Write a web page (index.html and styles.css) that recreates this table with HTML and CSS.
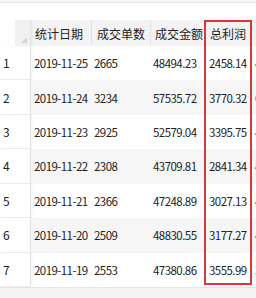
FILE: index.html
```html
<!DOCTYPE html>
<html lang="zh">
<head>
<meta charset="utf-8">
<link rel="stylesheet" href="styles.css">
</head>
<body>
<div class="topbar"></div>
<div class="sheet">
  <div class="row head">
    <div class="cell num corner"><span class="tri"></span></div>
    <div class="cell c1">统计日期</div>
    <div class="cell c2">成交单数</div>
    <div class="cell c3">成交金额</div>
    <div class="cell c4">总利润</div>
    <div class="cell c5">利润率</div>
  </div>
  <div class="row">
    <div class="cell num">1</div><div class="cell c1">2019-11-25</div><div class="cell c2">2665</div><div class="cell c3">48494.23</div><div class="cell c4">2458.14</div><div class="cell c5">4.99</div>
  </div>
  <div class="row even">
    <div class="cell num">2</div><div class="cell c1">2019-11-24</div><div class="cell c2">3234</div><div class="cell c3">57535.72</div><div class="cell c4">3770.32</div><div class="cell c5">6.55</div>
  </div>
  <div class="row">
    <div class="cell num">3</div><div class="cell c1">2019-11-23</div><div class="cell c2">2925</div><div class="cell c3">52579.04</div><div class="cell c4">3395.75</div><div class="cell c5">4.46</div>
  </div>
  <div class="row even">
    <div class="cell num">4</div><div class="cell c1">2019-11-22</div><div class="cell c2">2308</div><div class="cell c3">43709.81</div><div class="cell c4">2841.34</div><div class="cell c5">4.50</div>
  </div>
  <div class="row">
    <div class="cell num">5</div><div class="cell c1">2019-11-21</div><div class="cell c2">2366</div><div class="cell c3">47248.89</div><div class="cell c4">3027.13</div><div class="cell c5">4.41</div>
  </div>
  <div class="row even">
    <div class="cell num">6</div><div class="cell c1">2019-11-20</div><div class="cell c2">2509</div><div class="cell c3">48830.55</div><div class="cell c4">3177.27</div><div class="cell c5">4.61</div>
  </div>
  <div class="row">
    <div class="cell num">7</div><div class="cell c1">2019-11-19</div><div class="cell c2">2553</div><div class="cell c3">47380.86</div><div class="cell c4">3555.99</div><div class="cell c5">3.92</div>
  </div>
  <div class="highlight"></div>
</div>
<div class="footer"></div>
</body>
</html>
```

FILE: styles.css
```css
html, body {
  margin: 0;
  padding: 0;
}
body {
  width: 256px;
  height: 298px;
  overflow: hidden;
  background: #ffffff;
  font-family: "Noto Sans CJK SC", "Noto Sans", sans-serif;
  color: #222222;
}
.topbar {
  height: 2px;
  background: #f6f6f6;
  border-bottom: 1px solid #e4e4e4;
  margin-bottom: 17px;
}
.sheet {
  position: relative;
  width: 256px;
  overflow: hidden;
  border-bottom: 1px solid #e6e6e6;
}
.row {
  display: flex;
  height: 34.43px;
  white-space: nowrap;
}
.row.even .cell:not(.num) {
  background: #f6f6f6;
}
.row.head {
  height: 26px;
}
.cell {
  flex: none;
  display: flex;
  align-items: center;
  box-sizing: border-box;
  font-size: 11.5px;
  letter-spacing: -0.55px;
  overflow: hidden;
}
.num {
  width: 31px;
  padding-left: 3px;
  font-size: 12px;
  letter-spacing: 0;
  border-right: 1px solid #e2e2e2;
  border-bottom: 1px solid #efefef;
  box-shadow: 1px 0 2px rgba(0,0,0,0.05);
  background: #ffffff;
}
.c1 { width: 61px; padding-left: 3px; }
.c2 { width: 59px; padding-left: 2px; }
.c3 { width: 54px; padding-left: 2px; }
.c4 { width: 47px; padding-left: 4px; }
.c5 { width: 60px; padding-left: 3px; }
.head .cell {
  background: #f3f3f3;
  font-size: 12px;
  letter-spacing: 0;
  border-right: 1px solid #e3e3e3;
  padding-left: 4px;
}
.head .c2 { padding-left: 5px; }
.head .c4 { padding-left: 5px; }
.head .corner {
  position: relative;
  background: linear-gradient(to right, #ffffff 0, #ffffff 15px, #f1f1f1 15px);
  border-bottom: none;
}
.tri {
  position: absolute;
  right: 3px;
  bottom: 3px;
  width: 0;
  height: 0;
  border-left: 6px solid transparent;
  border-bottom: 6px solid #d4d4d4;
}
.highlight {
  position: absolute;
  left: 204px;
  top: 0;
  width: 48px;
  height: 265px;
  box-sizing: border-box;
  border: 2px solid #d6393c;
}
.footer {
  height: 12px;
  background: #f3f3f3;
}
```
